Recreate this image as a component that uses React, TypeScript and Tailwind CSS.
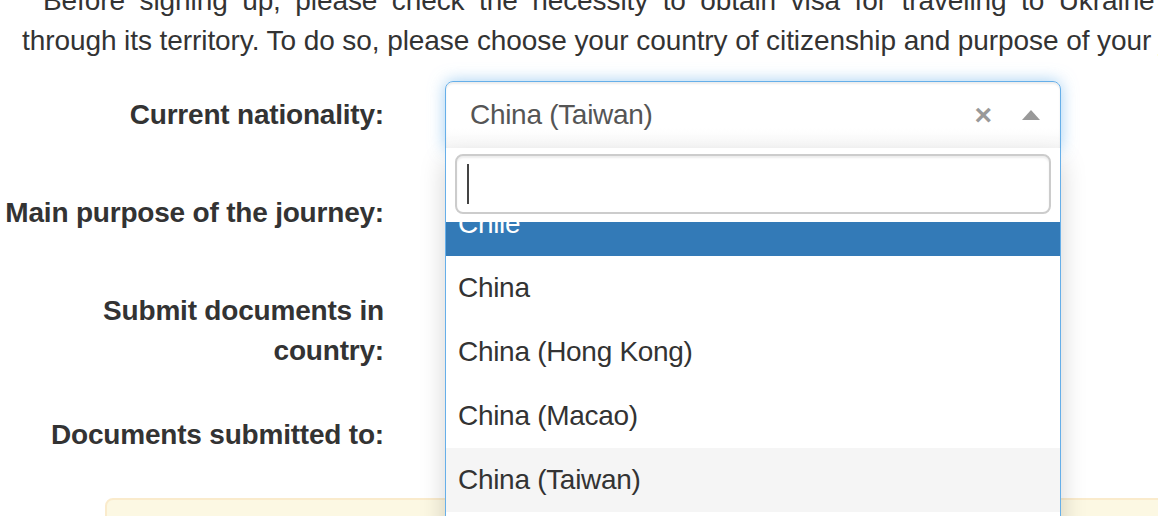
import React from "react";

const font = { fontFamily: '"Liberation Sans", Arial, sans-serif' };

const options = [
  { label: "Chile", active: true },
  { label: "China" },
  { label: "China (Hong Kong)" },
  { label: "China (Macao)" },
  { label: "China (Taiwan)", selected: true },
  { label: "Colombia" },
];

function Row({
  label,
  children,
  last,
}: {
  label: React.ReactNode;
  children?: React.ReactNode;
  last?: boolean;
}) {
  return (
    <div className={`flex ${last ? "mb-[29px]" : "mb-[30px]"}`}>
      <label className="w-[384px] shrink-0 pt-[14px] text-right text-[28px] font-bold leading-[40px] tracking-[-0.2px] text-[#333]">
        {label}
      </label>
      <div className="relative ml-[61px] w-[616px] shrink-0">
        {children ?? <div className="h-[68px]" />}
      </div>
    </div>
  );
}

function NationalitySelect() {
  return (
    <div className="relative">
      <div className="relative flex h-[68px] items-center rounded-t-[8px] border border-[#66afe9] bg-[linear-gradient(to_bottom,#ffffff_70%,#f7f7f7)] pl-[24px] pr-[20px] shadow-[inset_0_2px_2px_rgba(0,0,0,0.075),0_0_16px_rgba(102,175,233,0.6)]">
        <span className="flex-1 text-[28px] leading-[40px] tracking-[-0.3px] text-[#555]">China (Taiwan)</span>
        <span className="mr-[30px] text-[30px] font-bold leading-none text-[#999]">×</span>
        <svg width="18" height="10" viewBox="0 0 18 10">
          <path d="M0 10 L9 0 L18 10 Z" fill="#999" />
        </svg>
      </div>

      {/* open dropdown */}
      <div className="absolute left-0 top-[67px] z-10 w-[616px] border-x border-b border-[#66afe9] bg-white shadow-[0_12px_24px_rgba(0,0,0,0.175)]">
        <div className="px-[9px] pb-[8px] pt-[6px]">
          <div className="flex h-[60px] items-center rounded-[8px] border-2 border-[#ccc] bg-white px-[10px] shadow-[inset_0_2px_2px_rgba(0,0,0,0.075)]">
            <span className="block h-[40px] w-[2px] bg-[#444]" />
          </div>
        </div>
        <div className="h-[400px] overflow-hidden">
          <ul className="-mt-[30px]">
            {options.map((o) => (
              <li
                key={o.label}
                className={`px-[12px] py-[12px] text-[28px] leading-[40px] tracking-[-0.3px] ${
                  o.active
                    ? "bg-[#337ab7] text-white"
                    : o.selected
                      ? "bg-[#f5f5f5] text-[#333]"
                      : "text-[#333]"
                }`}
              >
                {o.label}
              </li>
            ))}
          </ul>
        </div>
      </div>
    </div>
  );
}

export default function App() {
  return (
    <div className="relative h-[516px] w-[1158px] overflow-hidden bg-white text-[#333]" style={font}>
      <div className="w-[1400px]">
        <div className="-mt-[19px] mb-[20px] pl-[22px] text-[28px] leading-[40px] tracking-[-0.08px]">
          <p className="w-[1262px] pl-[21px] text-justify [text-align-last:justify]">
            Before signing up, please check the necessity to obtain visa for traveling to Ukraine or transit
          </p>
          <p className="whitespace-nowrap">
            through its territory. To do so, please choose your country of citizenship and purpose of your journey.
          </p>
        </div>

        <Row label="Current nationality:">
          <NationalitySelect />
        </Row>
        <Row label="Main purpose of the journey:" />
        <Row
          label={
            <>
              Submit documents in
              <br />
              country:
            </>
          }
        />
        <Row label="Documents submitted to:" last />

        <div className="ml-[105px] h-[120px] w-[1200px] rounded-[8px] border-2 border-[#faebcc] bg-[#fcf8e3]" />
      </div>
    </div>
  );
}
